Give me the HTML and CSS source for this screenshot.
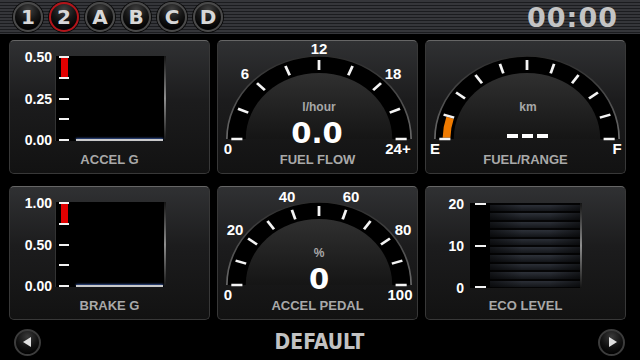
FILE: index.html
```html
<!DOCTYPE html>
<html>
<head>
  <meta charset="UTF-8" />
  <title>Gauges</title>
  <link rel="stylesheet" href="styles.css">
</head>
<body>

  <!-- Top bar: page tabs + clock -->
  <div class="topbar">
    <div class="tabs">
      <span class="tab">1</span>
      <span class="tab active">2</span>
      <span class="tab">A</span>
      <span class="tab">B</span>
      <span class="tab">C</span>
      <span class="tab">D</span>
    </div>
    <div class="clock">00:00</div>
  </div>

  <div class="grid">

    <!-- Accel G -->
    <div class="panel">
      <div class="chart">
        <div class="axis"><span>0.50</span><span>0.25</span><span>0.00</span></div>
        <div class="plot">
          <div class="ticks"><i></i><i></i><i></i><i></i><i></i></div>
          <b class="marker"></b>
          <div class="trace"></div>
        </div>
      </div>
      <div class="label">ACCEL G</div>
    </div>

    <!-- Fuel flow -->
    <div class="panel">
      <svg class="dial" width="199" height="110" viewBox="0 0 199 110">
        <defs>
          <linearGradient id="dome" x1="0" y1="0" x2="0" y2="1">
            <stop offset="0" stop-color="#303030" />
            <stop offset="1" stop-color="#151515" />
          </linearGradient>
          <linearGradient id="rim" x1="0" y1="0" x2="0" y2="1">
            <stop offset="0" stop-color="#2c2c2c" />
            <stop offset="1" stop-color="#6a6a6a" />
          </linearGradient>
        </defs>
        <g transform="translate(101 98) scale(1.11 1)">
          <path d="M-83 0 A83 83 0 0 1 83 0 Z" fill="#000" />
          <path d="M-83 0 A83 83 0 0 1 83 0" fill="none" stroke="url(#rim)" stroke-width="1.5" />
          <path d="M-66 0 A66 66 0 0 1 66 0 Z" fill="url(#dome)" />
          <g class="tick">
            <line x1="69" x2="79" />
            <line x1="69" x2="79" transform="rotate(-22.5)" />
            <line x1="69" x2="79" transform="rotate(-45)" />
            <line x1="69" x2="79" transform="rotate(-67.5)" />
            <line x1="69" x2="79" transform="rotate(-90)" />
            <line x1="69" x2="79" transform="rotate(-112.5)" />
            <line x1="69" x2="79" transform="rotate(-135)" />
            <line x1="69" x2="79" transform="rotate(-157.5)" />
            <line x1="69" x2="79" transform="rotate(-180)" />
          </g>
        </g>
        <text x="101" y="13">12</text>
        <text x="27" y="38">6</text>
        <text x="175" y="38">18</text>
        <text x="10" y="113">0</text>
        <text x="180" y="113">24+</text>
        <text class="unit" x="101" y="70">l/hour</text>
        <text class="value" x="99" y="102">0.0</text>
      </svg>
      <div class="label">FUEL FLOW</div>
    </div>

    <!-- Fuel / range -->
    <div class="panel">
      <svg class="dial" width="199" height="110" viewBox="0 0 199 110">
        <g transform="translate(101 98) scale(1.11 1)">
          <path d="M-83 0 A83 83 0 0 1 83 0 Z" fill="#000" />
          <path d="M-83 0 A83 83 0 0 1 83 0" fill="none" stroke="url(#rim)" stroke-width="1.5" />
          <path d="M-66 0 A66 66 0 0 1 66 0 Z" fill="url(#dome)" />
          <path class="level" d="M-72.49 -1.3 A72.5 72.5 0 0 1 -69.3 -21.2" />
          <g class="tick">
            <line x1="69" x2="79" />
            <line x1="69" x2="79" transform="rotate(-18)" />
            <line x1="69" x2="79" transform="rotate(-36)" />
            <line x1="69" x2="79" transform="rotate(-54)" />
            <line x1="69" x2="79" transform="rotate(-72)" />
            <line x1="69" x2="79" transform="rotate(-90)" />
            <line x1="69" x2="79" transform="rotate(-108)" />
            <line x1="69" x2="79" transform="rotate(-126)" />
            <line x1="69" x2="79" transform="rotate(-144)" />
            <line x1="69" x2="79" transform="rotate(-162)" />
            <line x1="69" x2="79" transform="rotate(-180)" />
          </g>
        </g>
        <text class="unit" x="102" y="70">km</text>
        <g class="dashes">
          <rect x="81" y="93" width="11" height="4" />
          <rect x="96" y="93" width="11" height="4" />
          <rect x="111" y="93" width="11" height="4" />
        </g>
        <text x="9" y="113">E</text>
        <text x="191" y="113">F</text>
      </svg>
      <div class="label">FUEL/RANGE</div>
    </div>

    <!-- Brake G -->
    <div class="panel">
      <div class="chart">
        <div class="axis"><span>1.00</span><span>0.50</span><span>0.00</span></div>
        <div class="plot">
          <div class="ticks"><i></i><i></i><i></i><i></i><i></i></div>
          <b class="marker"></b>
          <div class="trace"></div>
        </div>
      </div>
      <div class="label">BRAKE G</div>
    </div>

    <!-- Accel pedal -->
    <div class="panel">
      <svg class="dial" width="199" height="110" viewBox="0 0 199 110">
        <g transform="translate(101 98) scale(1.11 1)">
          <path d="M-83 0 A83 83 0 0 1 83 0 Z" fill="#000" />
          <path d="M-83 0 A83 83 0 0 1 83 0" fill="none" stroke="url(#rim)" stroke-width="1.5" />
          <path d="M-66 0 A66 66 0 0 1 66 0 Z" fill="url(#dome)" />
          <g class="tick">
            <line x1="69" x2="79" />
            <line x1="69" x2="79" transform="rotate(-18)" />
            <line x1="69" x2="79" transform="rotate(-36)" />
            <line x1="69" x2="79" transform="rotate(-54)" />
            <line x1="69" x2="79" transform="rotate(-72)" />
            <line x1="69" x2="79" transform="rotate(-90)" />
            <line x1="69" x2="79" transform="rotate(-108)" />
            <line x1="69" x2="79" transform="rotate(-126)" />
            <line x1="69" x2="79" transform="rotate(-144)" />
            <line x1="69" x2="79" transform="rotate(-162)" />
            <line x1="69" x2="79" transform="rotate(-180)" />
          </g>
        </g>
        <text x="17" y="48">20</text>
        <text x="69" y="15">40</text>
        <text x="133" y="15">60</text>
        <text x="185" y="48">80</text>
        <text x="10" y="113">0</text>
        <text x="182" y="113">100</text>
        <text class="unit" x="101" y="70">%</text>
        <text class="value" x="101" y="102">0</text>
      </svg>
      <div class="label">ACCEL PEDAL</div>
    </div>

    <!-- Eco level -->
    <div class="panel">
      <div class="eco">
        <div class="axis"><span>20</span><span>10</span><span>0</span></div>
        <div class="track"><i></i><i></i><i></i></div>
        <div class="bars"></div>
      </div>
      <div class="label">ECO LEVEL</div>
    </div>

  </div>

  <!-- Bottom bar: layout switcher -->
  <div class="bottombar">
    <span class="nav prev"></span>
    <div class="title">DEFAULT</div>
    <span class="nav next"></span>
  </div>

</body>
</html>
```

FILE: styles.css
```css
body {
  margin: 0;
  width: 640px;
  height: 360px;
  overflow: hidden;
  background: #000;
  color: #fff;
  font-family: "Liberation Sans", Arial, sans-serif;
}

/* top bar */

.topbar {
  height: 34px;
  display: flex;
  align-items: center;
  justify-content: space-between;
  padding: 0 22px 0 13px;
  background: repeating-linear-gradient(to bottom, #35363a 0, #35363a 2px, #1b1c1f 2px, #1b1c1f 3px);
}

.tabs {
  display: flex;
  gap: 6px;
}

.tab {
  width: 30px;
  height: 30px;
  box-sizing: border-box;
  border-radius: 50%;
  border: 2px solid #4a4a4a;
  box-shadow: 0 0 0 1px #0b0b0b;
  background: radial-gradient(circle at 50% 22%, #414141 0, #161616 45%, #040404 75%);
  display: flex;
  align-items: center;
  justify-content: center;
  color: #d8d8d8;
  font: bold 20px "DejaVu Sans", sans-serif;
}

.tab.active {
  border-color: #b3141a;
}

.clock {
  color: #c4c4c4;
  font: bold 27px "DejaVu Sans", sans-serif;
  letter-spacing: 1px;
}

/* panels */

.grid {
  display: grid;
  grid-template-columns: repeat(3, 201px);
  grid-template-rows: repeat(2, 134px);
  column-gap: 7px;
  row-gap: 12px;
  margin: 6px 0 0 9px;
}

.panel {
  box-sizing: border-box;
  display: flex;
  flex-direction: column;
  padding-bottom: 5px;
  border-radius: 5px;
  border: 1px solid #383838;
  border-top-color: #666;
  background: linear-gradient(#303133, #1c1c1d 45%, #121212);
}

.label {
  margin-top: auto;
  text-align: center;
  font-size: 13px;
  line-height: 16px;
  font-weight: bold;
  color: #a9a9a9;
}

/* bar charts */

.chart {
  display: flex;
  align-items: flex-start;
  margin-top: 9px;
}

.axis {
  width: 42px;
  height: 97px;
  display: flex;
  flex-direction: column;
  justify-content: space-between;
  align-items: flex-end;
  font-size: 14px;
  line-height: 14px;
  font-weight: bold;
}

.plot {
  position: relative;
  box-sizing: border-box;
  display: flex;
  width: 111px;
  height: 85px;
  margin: 6px 0 0 3px;
  border-left: 1px solid #333;
  background: linear-gradient(#141414, #8e8e8e 50%, #141414) right / 2px 100% no-repeat, #000;
}

.ticks {
  width: 10px;
  margin-left: 3px;
  display: flex;
  flex-direction: column;
  justify-content: space-between;
}

.ticks i,
.track i {
  height: 2px;
  background: #f2f2f2;
}

.marker {
  position: absolute;
  left: 5px;
  top: 2px;
  width: 7px;
  height: 19px;
  background: #e10000;
}

.trace {
  flex: 1;
  align-self: flex-end;
  height: 2px;
  margin: 0 3px 0 7px;
  background: #c9c9c9;
  box-shadow: 0 -1px 2px #35549a;
}

/* dials */

.dial {
  display: block;
  overflow: visible;
}

.dial text {
  font: bold 15px "Liberation Sans", Arial, sans-serif;
  fill: #fff;
  text-anchor: middle;
}

.dial .unit {
  font-size: 12px;
  fill: #a8a8a8;
}

.dial .value {
  font: bold 29px "DejaVu Sans", sans-serif;
}

.tick line {
  stroke: #f4f4f4;
  stroke-width: 2.5;
}

.level {
  fill: none;
  stroke: #ef7a00;
  stroke-width: 7;
}

.dashes rect {
  fill: #fff;
}

/* eco level */

.eco {
  display: flex;
  align-items: flex-start;
  margin-top: 10px;
}

.eco .axis {
  width: 38px;
  height: 98px;
}

.track {
  box-sizing: border-box;
  width: 20px;
  height: 85px;
  margin: 6px 0 0 6px;
  padding: 0 4px 0 5px;
  background: #000;
  display: flex;
  flex-direction: column;
  justify-content: space-between;
}

.bars {
  width: 92px;
  height: 85px;
  margin-top: 6px;
  background:
    linear-gradient(#141414, #8e8e8e 50%, #141414) right / 2px 100% no-repeat,
    linear-gradient(to right, rgba(0, 0, 0, 0.55), rgba(0, 0, 0, 0) 35%, rgba(0, 0, 0, 0) 65%, rgba(0, 0, 0, 0.55)),
    repeating-linear-gradient(to bottom, #050506 0, #050506 2px, #2c3038 2px, #14161a 8.4px);
}

/* bottom bar */

.bottombar {
  box-sizing: border-box;
  height: 40px;
  display: flex;
  align-items: center;
  justify-content: space-between;
  padding: 4px 15px 0 14px;
}

.nav {
  width: 27px;
  height: 27px;
  box-sizing: border-box;
  border-radius: 50%;
  border: 2px solid #3c3c3c;
  background: radial-gradient(circle at 50% 25%, #3a3a3a 0, #121212 50%, #030303 80%);
  display: flex;
  align-items: center;
  justify-content: center;
}

.nav::before {
  content: "";
  border-top: 5px solid transparent;
  border-bottom: 5px solid transparent;
}

.prev::before {
  border-right: 8px solid #e0e0e0;
  margin-right: 2px;
}

.next::before {
  border-left: 8px solid #e0e0e0;
  margin-left: 2px;
}

.title {
  color: #c2c2c2;
  font: bold 21px "DejaVu Sans Condensed", sans-serif;
}
```
